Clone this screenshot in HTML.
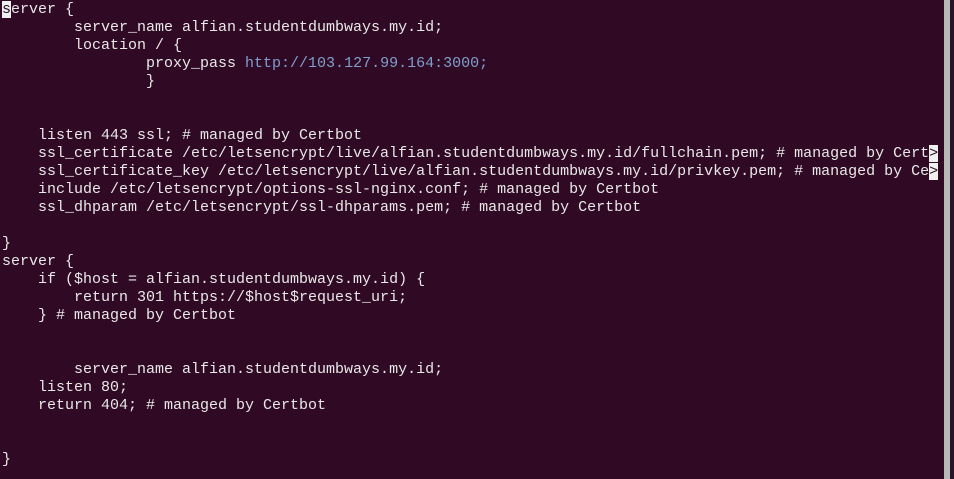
<!DOCTYPE html>
<html><head><style>
html,body{margin:0;padding:0;width:954px;height:479px;overflow:hidden;background:#300a24;}
pre{position:absolute;left:2px;top:1px;margin:0;font-family:"Liberation Mono",monospace;font-size:15px;line-height:18px;color:#e8e8e8;white-space:pre;}
.c{background:#f0f0f0;color:#300a24;}
.u{color:#7f9fcf;}
.bar{position:absolute;left:944px;top:0;width:6px;height:479px;background:#b8b8b8;}
.r{position:absolute;left:950px;top:0;width:4px;height:479px;background:#2c1428;}
</style></head><body>
<pre><span class="c">s</span>erver {
        server_name alfian.studentdumbways.my.id;
        location / {
                proxy_pass <span class="u">http://103.127.99.164:3000;</span>
                }


    listen 443 ssl; # managed by Certbot
    ssl_certificate /etc/letsencrypt/live/alfian.studentdumbways.my.id/fullchain.pem; # managed by Cert<span class="c">&gt;</span>
    ssl_certificate_key /etc/letsencrypt/live/alfian.studentdumbways.my.id/privkey.pem; # managed by Ce<span class="c">&gt;</span>
    include /etc/letsencrypt/options-ssl-nginx.conf; # managed by Certbot
    ssl_dhparam /etc/letsencrypt/ssl-dhparams.pem; # managed by Certbot

}
server {
    if ($host = alfian.studentdumbways.my.id) {
        return 301 https://$host$request_uri;
    } # managed by Certbot


        server_name alfian.studentdumbways.my.id;
    listen 80;
    return 404; # managed by Certbot


}</pre>
<div class="bar"></div><div class="r"></div>
</body></html>
